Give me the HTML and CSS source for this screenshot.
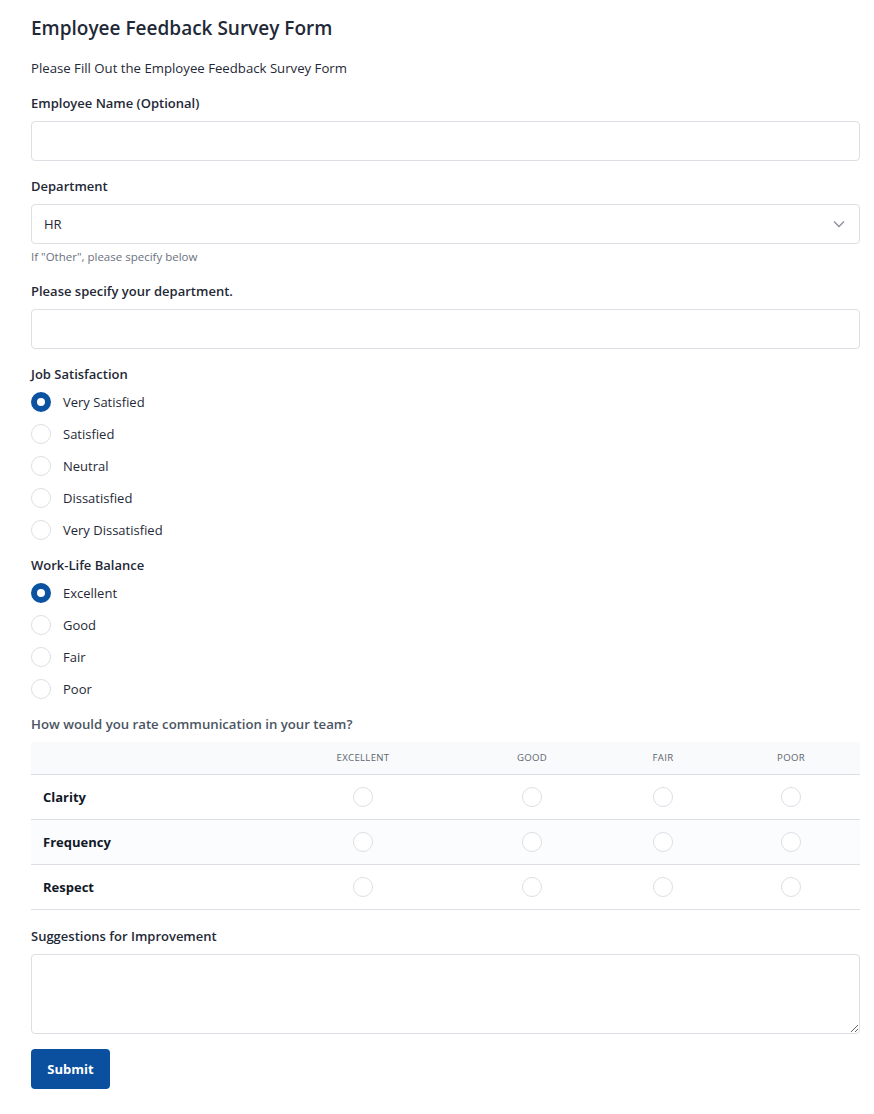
FILE: index.html
```html
<!DOCTYPE html>
<html lang="en">
<head>
<meta charset="utf-8">
<title>Employee Feedback Survey Form</title>
<link rel="stylesheet" href="styles.css">
</head>
<body>
<form class="form">
  <h1 class="title">Employee Feedback Survey Form</h1>
  <p class="intro">Please Fill Out the Employee Feedback Survey Form</p>

  <div class="field">
    <label class="label" for="name">Employee Name (Optional)</label>
    <input class="input" id="name" type="text">
  </div>

  <div class="field dept-field">
    <label class="label" for="dept">Department</label>
    <div class="select-wrap">
      <select class="input select" id="dept">
        <option>HR</option>
        <option>Finance</option>
        <option>Other</option>
      </select>
      <svg class="chevron" width="12" height="8" viewBox="0 0 12 8"><path d="M1 1.5l5 5 5-5" fill="none" stroke="#8a9099" stroke-width="1.3"/></svg>
    </div>
    <div class="help">If "Other", please specify below</div>
  </div>

  <div class="field">
    <label class="label" for="other">Please specify your department.</label>
    <input class="input" id="other" type="text">
  </div>

  <div class="field group">
    <div class="label">Job Satisfaction</div>
    <label class="radio-row"><input class="radio" type="radio" name="js" checked><span>Very Satisfied</span></label>
    <label class="radio-row"><input class="radio" type="radio" name="js"><span>Satisfied</span></label>
    <label class="radio-row"><input class="radio" type="radio" name="js"><span>Neutral</span></label>
    <label class="radio-row"><input class="radio" type="radio" name="js"><span>Dissatisfied</span></label>
    <label class="radio-row"><input class="radio" type="radio" name="js"><span>Very Dissatisfied</span></label>
  </div>

  <div class="field group group-next">
    <div class="label">Work-Life Balance</div>
    <label class="radio-row"><input class="radio" type="radio" name="wl" checked><span>Excellent</span></label>
    <label class="radio-row"><input class="radio" type="radio" name="wl"><span>Good</span></label>
    <label class="radio-row"><input class="radio" type="radio" name="wl"><span>Fair</span></label>
    <label class="radio-row"><input class="radio" type="radio" name="wl"><span>Poor</span></label>
  </div>

  <div class="field matrix-field">
    <div class="label muted">How would you rate communication in your team?</div>
    <table class="matrix">
      <colgroup>
        <col class="c-label"><col class="c-ex"><col class="c-good"><col class="c-fair"><col class="c-poor">
      </colgroup>
      <thead>
        <tr><th></th><th>Excellent</th><th>Good</th><th>Fair</th><th>Poor</th></tr>
      </thead>
      <tbody>
        <tr>
          <td class="row-label">Clarity</td>
          <td><input class="radio" type="radio" name="cl"></td>
          <td><input class="radio" type="radio" name="cl"></td>
          <td><input class="radio" type="radio" name="cl"></td>
          <td><input class="radio" type="radio" name="cl"></td>
        </tr>
        <tr class="alt">
          <td class="row-label">Frequency</td>
          <td><input class="radio" type="radio" name="fr"></td>
          <td><input class="radio" type="radio" name="fr"></td>
          <td><input class="radio" type="radio" name="fr"></td>
          <td><input class="radio" type="radio" name="fr"></td>
        </tr>
        <tr>
          <td class="row-label">Respect</td>
          <td><input class="radio" type="radio" name="re"></td>
          <td><input class="radio" type="radio" name="re"></td>
          <td><input class="radio" type="radio" name="re"></td>
          <td><input class="radio" type="radio" name="re"></td>
        </tr>
      </tbody>
    </table>
  </div>

  <div class="field textarea-field">
    <label class="label" for="sugg">Suggestions for Improvement</label>
    <textarea class="input textarea" id="sugg"></textarea>
  </div>

  <button class="submit" type="button">Submit</button>
</form>
</body>
</html>
```
FILE: styles.css
```css
* { box-sizing: border-box; }
html, body { margin: 0; background: #fff; }
body {
  font-family: "Open Sans", "Noto Sans", sans-serif;
  color: #1f2937;
  font-size: 13px;
}
.form {
  padding: 14px 14px 20px 31px;
  display: flex;
  flex-direction: column;
}
.title {
  margin: 0;
  font-size: 19px;
  font-weight: 600;
  line-height: 28px;
  color: #1f2937;
}
.intro {
  margin: 17px 0 0;
  font-size: 13.2px;
  line-height: 18px;
  color: #1f2937;
}
.field { display: flex; flex-direction: column; margin-top: 17px; }
.field.dept-field { margin-top: 16px; }
.label {
  font-size: 13px;
  font-weight: 600;
  line-height: 18px;
  color: #1f2937;
  margin-bottom: 9px;
}
.label.muted { color: #4b5563; font-size: 13.2px; }
.input {
  display: block;
  width: 100%;
  height: 40px;
  border: 1px solid #dcdfe3;
  border-radius: 4px;
  background: #fff;
  font-family: inherit;
  font-size: 13px;
  color: #1f2937;
  padding: 0 12px;
  outline: none;
}
.select-wrap { position: relative; }
.select { appearance: none; -webkit-appearance: none; }
.chevron { position: absolute; right: 15px; top: 16px; pointer-events: none; }
.help {
  font-size: 11.5px;
  color: #6b7280;
  line-height: 14px;
  margin-top: 6px;
  margin-bottom: 1px;
}
.group .label { margin-bottom: 0; }
.radio-row {
  display: flex;
  align-items: center;
  height: 32px;
  gap: 12px;
  font-size: 13px;
  color: #1f2937;
}
.group { margin-top: 16px; }
.group.group-next { margin-top: 10px; }
.group .label + .radio-row { margin-top: 3px; }
.radio {
  appearance: none;
  -webkit-appearance: none;
  width: 20px;
  height: 20px;
  margin: 0;
  border: 1px solid #dcdfe3;
  border-radius: 50%;
  background: #fff;
  flex: none;
  display: inline-block;
  vertical-align: middle;
}
.radio:checked {
  border: 6.5px solid #0b52a0;
  background: #fff;
}
.matrix-field { margin-top: 10px; }
.matrix {
  width: 100%;
  border-collapse: collapse;
  table-layout: fixed;
}
.c-label { width: 235px; }
.c-ex { width: 194px; }
.c-good { width: 144px; }
.c-fair { width: 118px; }
.c-poor { width: 138px; }
.matrix thead tr { background: #f9fafb; }
.matrix th {
  height: 32px;
  font-size: 9.6px;
  font-weight: 400;
  letter-spacing: 0.3px;
  text-transform: uppercase;
  color: #5f6670;
  text-align: center;
  border-bottom: 1px solid #dcdfe3;
  padding: 0;
}
.matrix td {
  height: 45px;
  border-bottom: 1px solid #dcdfe3;
  text-align: center;
  padding: 0;
}
.matrix td .radio { display: block; margin: 0 auto; }
.matrix tr.alt { background: #fafcfe; }
.matrix .row-label {
  text-align: left;
  padding-left: 12px;
  font-weight: 700;
  font-size: 13px;
  color: #111827;
}
.textarea-field { margin-top: 17px; }
.textarea {
  height: 80px;
  padding: 8px 12px;
  resize: vertical;
}
.submit {
  align-self: flex-start;
  margin-top: 15px;
  height: 40px;
  width: 79px;
  border: none;
  border-radius: 4px;
  background: #0b4f9f;
  color: #fff;
  font-family: inherit;
  font-weight: 700;
  font-size: 13px;
}
```
